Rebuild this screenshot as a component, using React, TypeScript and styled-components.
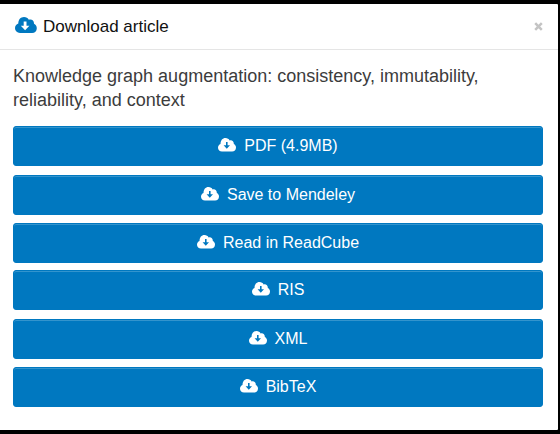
import React from "react";
import styled, { createGlobalStyle } from "styled-components";

const GlobalStyle = createGlobalStyle`
  * { box-sizing: border-box; }
  body { margin: 0; background: #000; font-family: "Liberation Sans", Arial, sans-serif; }
`;

const Backdrop = styled.div`
  width: 560px;
  height: 434px;
  padding: 4px 2px 4px 0;
  background: #000;
`;

const Dialog = styled.section`
  height: 426px;
  background: #fff;
  border-radius: 0 1px 1px 0;
`;

const Header = styled.header`
  display: flex;
  align-items: center;
  height: 46px;
  padding: 0 15px;
  border-bottom: 1px solid #e5e5e5;
`;

const Title = styled.h1`
  flex: 1;
  margin: 0 0 0 6px;
  font-size: 17px;
  font-weight: 400;
  line-height: 24px;
  color: #111;
`;

const CloseButton = styled.button`
  display: flex;
  padding: 0;
  border: 0;
  background: none;
  color: #c4c4c4;
`;

const Body = styled.div`
  padding: 14px 15px 0 13px;
`;

const ArticleTitle = styled.h2`
  margin: 0 0 14px;
  font-size: 18px;
  font-weight: 400;
  line-height: 24px;
  color: #3c3c3c;
`;

const Actions = styled.div`
  display: flex;
  flex-direction: column;
`;

const ActionButton = styled.button<{ $gap: number }>`
  display: flex;
  align-items: center;
  justify-content: center;
  gap: 8px;
  height: 40px;
  margin: 0 0 ${(p) => p.$gap}px;
  padding: 0;
  border: 1px solid #0078c0;
  border-radius: 3px;
  background: #0078c0;
  box-shadow: inset 0 1px 0 #3394cd;
  color: #fff;
  font: 400 16px/20px "Liberation Sans", Arial, sans-serif;
`;

const HeaderCloud = styled.svg`
  display: block;
  flex: none;
  width: 22px;
  height: 16px;
  margin-top: -3px;
  color: #0078c0;
`;

const ButtonCloud = styled.svg`
  display: block;
  flex: none;
  width: 18px;
  height: 14px;
  margin-top: -2px;
  color: #fff;
`;

const Label = styled.span``;

const actions = [
  { label: "PDF (4.9MB)", gap: 9 },
  { label: "Save to Mendeley", gap: 8 },
  { label: "Read in ReadCube", gap: 7 },
  { label: "RIS", gap: 9 },
  { label: "XML", gap: 8 },
  { label: "BibTeX", gap: 0 },
];

export default function App() {
  return (
    <Backdrop>
      <GlobalStyle />
      <Dialog>
        <Header>
          <HeaderCloud viewBox="0 0 22 16" fill="currentColor" aria-hidden>
            <path
              fillRule="evenodd"
              d="M5 16C2.200 16 0 13.800 0 11.100 0 9 1.400 7.200 3.300 6.500 3.300 2.800 5.500 0 9 0c2.200 0 3.900 1 4.800 2.700 2.700-1 5.200.7 5.200 3.500v.6c1.700.7 2.800 2.300 2.800 4.400 0 2.800-2 4.800-4.700 4.800H5zM8.700 4.500v4.200H5.800l4.300 4.500 4.300-4.500h-2.900V4.500H8.700z"
            />
          </HeaderCloud>
          <Title>Download article</Title>
          <CloseButton aria-label="Close">
            <svg width="9" height="9" viewBox="0 0 9 9" fill="none" stroke="currentColor" strokeWidth="2.500">
              <path d="M1.200 1.200 7.800 7.800M7.800 1.200 1.200 7.800" />
            </svg>
          </CloseButton>
        </Header>
        <Body>
          <ArticleTitle>
            Knowledge graph augmentation: consistency, immutability, reliability, and context
          </ArticleTitle>
          <Actions>
            {actions.map(({ label, gap }) => (
              <ActionButton key={label} $gap={gap}>
                <ButtonCloud viewBox="0 0 18 14" fill="currentColor" aria-hidden>
                  <path
                    fillRule="evenodd"
                    d="M4 13.600C1.800 13.600 0 11.900 0 9.700c0-1.800 1-3.200 2.500-3.800C2.600 2.400 4.500.1 7.500.1c1.900 0 3.300.9 4.100 2.300 2.300-.7 4.200.8 4.200 3.200v.5c1.300.6 2.200 1.900 2.200 3.500 0 2.400-1.700 4-3.900 4H4zM8 4v3.300H5.600l3.200 3.400 3.200-3.400H9.600V4H8z"
                  />
                </ButtonCloud>
                <Label>{label}</Label>
              </ActionButton>
            ))}
          </Actions>
        </Body>
      </Dialog>
    </Backdrop>
  );
}
